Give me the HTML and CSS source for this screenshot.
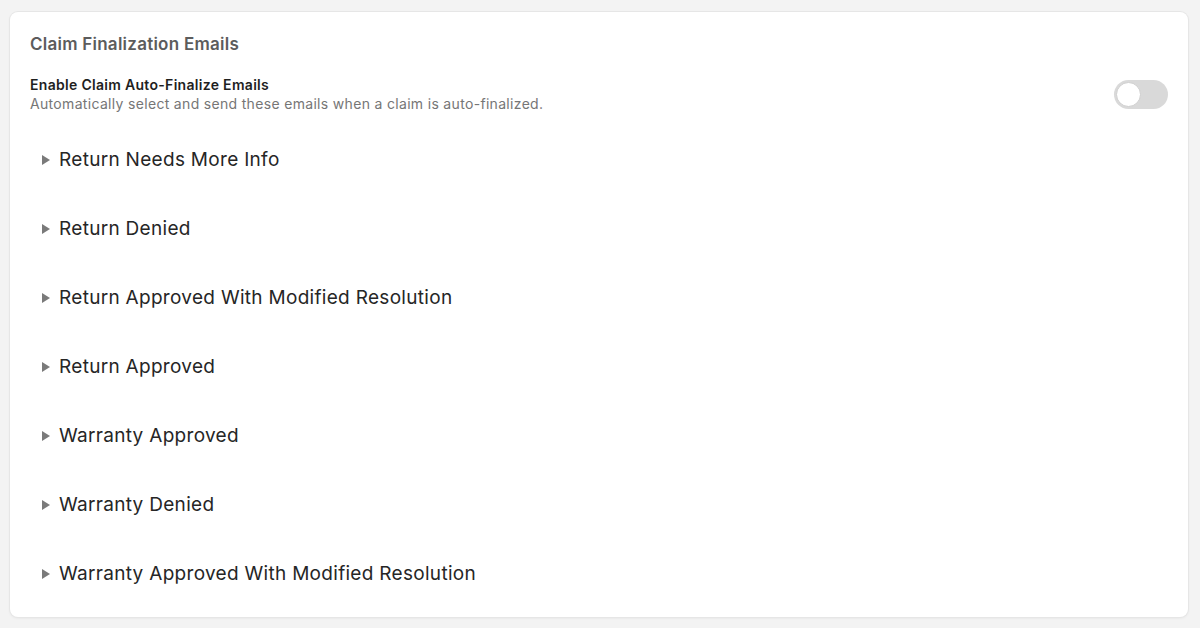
FILE: index.html
```html
<!DOCTYPE html>
<html>
<head>
<meta charset="utf-8">
<link rel="stylesheet" href="styles.css">
</head>
<body>
<div class="card">
  <h2 class="title">Claim Finalization Emails</h2>
  <div class="setting">
    <div class="setting-text">
      <div class="setting-label">Enable Claim Auto-Finalize Emails</div>
      <div class="setting-desc">Automatically select and send these emails when a claim is auto-finalized.</div>
    </div>
    <div class="toggle"><span class="knob"></span></div>
  </div>
  <ul class="list">
    <li class="item"><span class="caret"></span>Return Needs More Info</li>
    <li class="item"><span class="caret"></span>Return Denied</li>
    <li class="item"><span class="caret"></span>Return Approved With Modified Resolution</li>
    <li class="item"><span class="caret"></span>Return Approved</li>
    <li class="item"><span class="caret"></span>Warranty Approved</li>
    <li class="item"><span class="caret"></span>Warranty Denied</li>
    <li class="item"><span class="caret"></span>Warranty Approved With Modified Resolution</li>
  </ul>
</div>
</body>
</html>
```
FILE: styles.css
```css
html, body {
  margin: 0;
  background: #f3f3f3;
  font-family: Inter, "Noto Sans", sans-serif;
}
body {
  padding: 12px 12px 11px 10px;
}
.card {
  background: #fff;
  border-radius: 8px;
  box-shadow: 0 0 0 1px #e6e6e6, 0 1px 3px rgba(0,0,0,0.08);
  padding: 20px 20px 10px 20px;
  height: 605px;
  box-sizing: border-box;
}
.title {
  margin: 0;
  font-size: 17px;
  line-height: 24px;
  font-weight: 600;
  color: #5c5c5c;
  letter-spacing: 0.25px;
}
.setting {
  display: flex;
  justify-content: space-between;
  align-items: center;
  margin-top: 20px;
}
.setting-label {
  font-size: 14px;
  line-height: 18px;
  font-weight: 600;
  color: #1f1f1f;
  letter-spacing: 0.3px;
}
.setting-desc {
  font-size: 14px;
  line-height: 19px;
  color: #767676;
  letter-spacing: 0.32px;
}
.toggle {
  width: 54px;
  height: 29px;
  border-radius: 15px;
  background: #d9d9d9;
  box-sizing: border-box;
  padding: 2px;
}
.knob {
  display: block;
  width: 25px;
  height: 25px;
  border-radius: 50%;
  background: #fff;
  box-sizing: border-box;
  border: 1px solid #cfcfcf;
}
.list {
  list-style: none;
  margin: 12px 0 0;
  padding: 0;
}
.item {
  display: flex;
  align-items: center;
  height: 69px;
  padding-left: 12px;
  font-size: 19px;
  letter-spacing: 0.3px;
  color: #262626;
}
.caret {
  width: 0;
  height: 0;
  border-top: 5px solid transparent;
  border-bottom: 5px solid transparent;
  border-left: 8px solid #7a7a7a;
  margin-right: 9px;
}
```
